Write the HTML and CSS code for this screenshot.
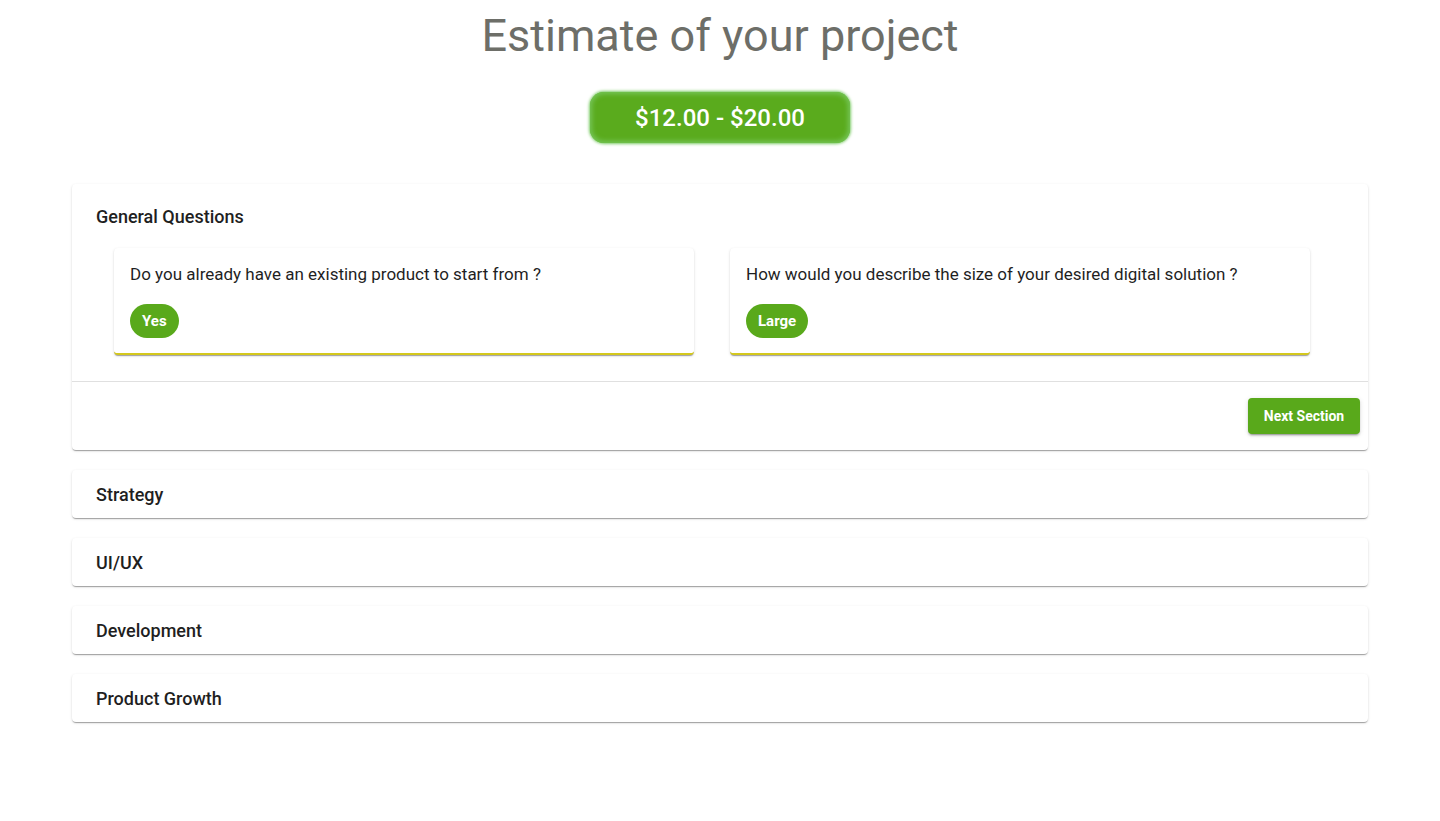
FILE: index.html
```html
<!DOCTYPE html>
<html lang="en">
<head>
<meta charset="utf-8">
<title>Estimate of your project</title>
<link rel="stylesheet" href="styles.css">
</head>
<body>
<main class="page">
  <h1 class="title">Estimate of your project</h1>
  <div class="price">$12.00 - $20.00</div>

  <section class="accordions">
    <div class="accordion expanded">
      <div class="summary">General Questions</div>
      <div class="details">
        <div class="qcard">
          <p class="question">Do you already have an existing product to start from ?</p>
          <span class="chip">Yes</span>
        </div>
        <div class="qcard">
          <p class="question">How would you describe the size of your desired digital solution ?</p>
          <span class="chip">Large</span>
        </div>
      </div>
      <div class="actions">
        <button class="next-btn" type="button">Next Section</button>
      </div>
    </div>

    <div class="accordion"><div class="summary collapsed">Strategy</div></div>
    <div class="accordion"><div class="summary collapsed">UI/UX</div></div>
    <div class="accordion"><div class="summary collapsed">Development</div></div>
    <div class="accordion"><div class="summary collapsed">Product Growth</div></div>
  </section>
</main>
</body>
</html>
```

FILE: styles.css
```css
* { box-sizing: border-box; }

html, body {
  margin: 0;
  padding: 0;
  background: #ffffff;
}

body {
  font-family: Roboto, "Liberation Sans", Arial, sans-serif;
  color: rgba(0, 0, 0, 0.87);
}

.page {
  display: flex;
  flex-direction: column;
  align-items: center;
  padding-top: 8px;
}

.title {
  margin: 0;
  font-size: 45px;
  line-height: 56px;
  font-weight: 400;
  color: #6d6e68;
  letter-spacing: 0;
}

.price {
  margin-top: 28px;
  width: 260px;
  height: 51px;
  border-radius: 14px;
  background: #5aab1d;
  box-shadow: 0 0 3px 1px #7ccb66, inset 0 0 5px 2px #76c65a;
  color: #ffffff;
  font-size: 24px;
  font-weight: 500;
  display: flex;
  align-items: center;
  justify-content: center;
}

.accordions {
  width: 1296px;
  margin-top: 41px;
  display: flex;
  flex-direction: column;
  gap: 20px;
  padding-bottom: 40px;
}

.accordion {
  background: #fff;
  border-radius: 4px;
  box-shadow: 0px 2px 1px -1px rgba(0,0,0,0.2), 0px 1px 1px 0px rgba(0,0,0,0.14), 0px 1px 3px 0px rgba(0,0,0,0.12);
}

.summary {
  height: 64px;
  padding: 0 24px;
  display: flex;
  align-items: center;
  font-size: 18px;
  font-weight: 500;
  color: #1f1f1f;
}

.summary.collapsed {
  height: 48px;
}

.details {
  display: flex;
  gap: 36px;
  padding: 0 16px 26px 42px;
}

.qcard {
  width: 580px;
  background: #fff;
  border-radius: 4px;
  border-bottom: 2px solid #d4c81c;
  box-shadow: 0px 2px 1px -1px rgba(0,0,0,0.2), 0px 1px 1px 0px rgba(0,0,0,0.14), 0px 1px 3px 0px rgba(0,0,0,0.12);
  padding: 14px 16px 15px;
  display: flex;
  flex-direction: column;
  align-items: flex-start;
}

.question {
  margin: 0;
  font-size: 17px;
  line-height: 24px;
  color: #1f1f1f;
}

.chip {
  margin-top: 18px;
  height: 34px;
  padding: 0 12px;
  border-radius: 17px;
  background: #59a91b;
  color: #fff;
  font-size: 15px;
  font-weight: 700;
  display: inline-flex;
  align-items: center;
}

.actions {
  border-top: 1px solid #e0e0e0;
  padding: 16px 8px;
  display: flex;
  justify-content: flex-end;
}

.next-btn {
  height: 36px;
  width: 112px;
  border: none;
  border-radius: 4px;
  background: #59a91b;
  color: #fff;
  font-family: Roboto, "Liberation Sans", Arial, sans-serif;
  font-size: 14px;
  font-weight: 700;
  white-space: nowrap;
  padding: 0;
  box-shadow: 0px 3px 1px -2px rgba(0,0,0,0.2), 0px 2px 2px 0px rgba(0,0,0,0.14), 0px 1px 5px 0px rgba(0,0,0,0.12);
  cursor: pointer;
}
```
